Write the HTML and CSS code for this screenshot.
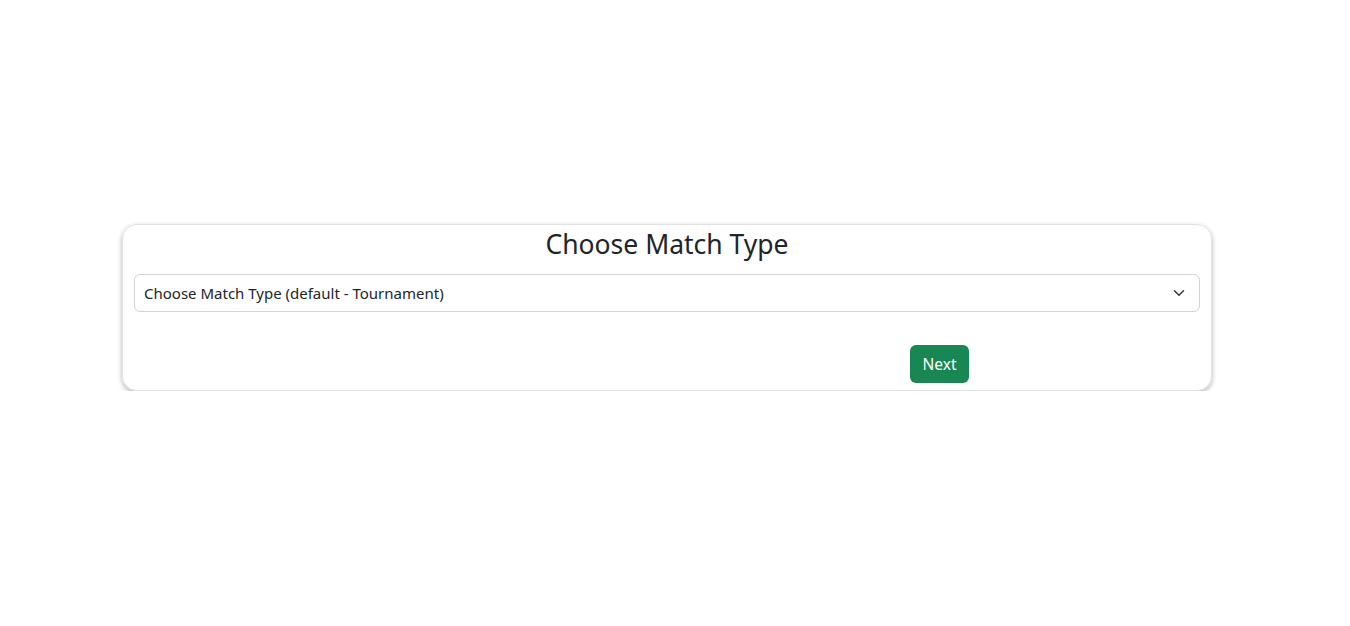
FILE: index.html
```html
<!DOCTYPE html>
<html>
<head>
<meta charset="utf-8">
<link rel="stylesheet" href="styles.css">
</head>
<body>
<div class="page">
  <div class="card">
    <h3 class="title">Choose Match Type</h3>
    <div class="select">
      <span class="select-text">Choose Match Type (default - Tournament)</span>
      <svg class="chev" width="16" height="16" viewBox="0 0 16 16"><path d="M2 5l6 6 6-6" fill="none" stroke="#343a40" stroke-width="2" stroke-linecap="round" stroke-linejoin="round"/></svg>
    </div>
    <div class="actions">
      <div class="spacer"></div>
      <div class="btn-col"><button class="btn">Next</button></div>
    </div>
  </div>
</div>
</body>
</html>
```

FILE: styles.css
```css
html, body { margin: 0; padding: 0; background: #fff; }
body { font-family: "Noto Sans", "Open Sans", sans-serif; color: #212529; }
.page { padding: 224px 138px 0 122px; }
.card {
  box-sizing: border-box;
  width: 1090px;
  height: 167px;
  border: 1px solid #e2e2e2;
  border-radius: 15px;
  box-shadow: 0 2px 5px rgba(0,0,0,0.3);
  padding: 0 11px;
  display: flex;
  flex-direction: column;
}
.title {
  margin: 3px 0 13px;
  text-align: center;
  font-size: 26.5px;
  font-weight: 400;
  line-height: 33px;
}
.select {
  box-sizing: border-box;
  height: 38px;
  border: 1px solid #ced4da;
  border-radius: 6px;
  display: flex;
  align-items: center;
  justify-content: space-between;
  padding: 0 12px 0 9px;
  font-size: 15px;
}
.chev { width: 12px; height: 12px; margin-right: 2px; }
.actions { display: flex; margin-top: 33px; }
.spacer { flex: 0 0 776px; }
.btn {
  font-family: inherit;
  background: #198754;
  color: #fff;
  border: none;
  border-radius: 6px;
  height: 38px;
  width: 59px;
  font-size: 15.5px;
  padding: 0;
}
```
